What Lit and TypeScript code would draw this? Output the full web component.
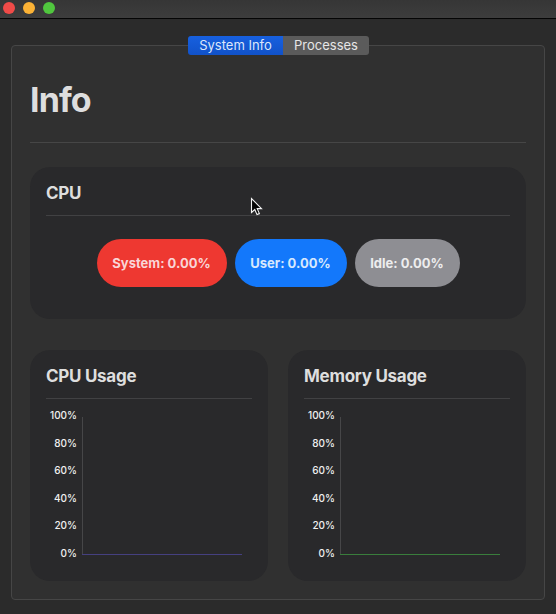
import { LitElement, html, css, svg } from "lit";
import { customElement, property } from "lit/decorators.js";

@customElement("usage-chart")
class UsageChart extends LitElement {
  @property() heading = "";
  @property() tone = "cpu";

  static styles = css`
    :host { display: block; box-sizing: border-box; height: 231px; padding: 16px; border-radius: 20px; background: #29292b; }
    .heading { height: 20px; margin: 0; font: 700 17px/20px Inter, sans-serif; letter-spacing: -0.28px; color: #dedede; white-space: nowrap; }
    .rule { height: 1px; margin-top: 12px; background: #414143; }
    .chart { display: flex; padding-top: 10px; }
    .labels { display: flex; flex-direction: column; justify-content: space-between; width: 31px; height: 150px; text-align: right; font: 500 10px/12px Inter, sans-serif; color: #f0f0f0; }
    .plot { display: block; margin: 8px 0 0 5px; }
    .axis { fill: #464648; }
    .cpu { fill: #454080; }
    .memory { fill: #397d3c; }
  `;

  render() {
    return html`
      <h2 class="heading">${this.heading}</h2>
      <div class="rule"></div>
      <div class="chart">
        <div class="labels">
          ${[100, 80, 60, 40, 20, 0].map((n) => html`<span>${n}%</span>`)}
        </div>
        <svg class="plot" width="160" height="138">
          ${svg`<rect class="axis" x="0" y="0" width="1" height="137"/><rect class=${this.tone} x="0" y="137" width="160" height="1"/>`}
        </svg>
      </div>
    `;
  }
}

@customElement("app-root")
class AppRoot extends LitElement {
  static styles = css`
    :host { display: flex; flex-direction: column; position: relative; box-sizing: border-box; height: 614px; overflow: hidden; background: #2b2b2b; color: #dedede; font-family: Inter, sans-serif; }
    .titlebar { display: flex; box-sizing: border-box; gap: 8px; height: 19px; padding: 2px 3px; border-bottom: 1px solid #050505; background: linear-gradient(#363636, #3d3d3d); }
    .light { width: 12px; height: 12px; border-radius: 50%; }
    .close { background: #f04b48; }
    .minimize { background: #fbb235; }
    .zoom { background: #50c63e; }
    .panel { box-sizing: border-box; width: 534px; height: 555px; margin: 26px 0 0 11px; padding: 0 18px; border: 1px solid #464646; border-radius: 4px; background: #303030; }
    .tabs { display: flex; width: 181px; height: 19px; margin: -10px auto 0; border-radius: 3px; overflow: hidden; position: relative; left: 0.5px; }
    .tab { text-align: center; font: 400 13px/19px Inter, sans-serif; color: #e6e6e6; background: #5b5b5b; white-space: nowrap; }
    .selected { width: 95px; background: linear-gradient(#1760df, #1152c9); color: #dce6fa; }
    .other { width: 86px; }
    .title { height: 42px; margin: 24px 0 0; font: 700 34px/42px Inter, sans-serif; letter-spacing: -0.9px; }
    .rule { height: 1px; background: #464646; }
    .title-rule { margin-top: 21px; }
    .card { box-sizing: border-box; height: 152px; margin-top: 24px; padding: 16px; border-radius: 20px; background: #29292b; }
    .heading { height: 20px; margin: 0; font: 700 17px/20px Inter, sans-serif; letter-spacing: -0.28px; }
    .card-rule { margin-top: 12px; background: #414143; }
    .pills { display: flex; gap: 8px; justify-content: center; margin-top: 23px; }
    .pill { box-sizing: border-box; height: 48px; border-radius: 24px; text-align: center; font: 700 13px/49px Inter, sans-serif; white-space: nowrap; }
    .system { width: 130px; background: #ee3831; color: #f9d5d7; }
    .user { width: 112px; background: #1378fb; color: #d7e8fd; }
    .idle { width: 105px; background: #8e8e93; color: #ededee; }
    .charts { display: grid; grid-template-columns: 238px 238px; gap: 20px; margin-top: 31px; }
    .cursor { position: absolute; left: 250px; top: 197px; }
  `;

  render() {
    return html`
      <div class="titlebar">
        <span class="light close"></span><span class="light minimize"></span><span class="light zoom"></span>
      </div>
      <main class="panel">
        <div class="tabs">
          <div class="tab selected">System Info</div>
          <div class="tab other">Processes</div>
        </div>
        <h1 class="title">Info</h1>
        <div class="rule title-rule"></div>
        <section class="card">
          <h2 class="heading">CPU</h2>
          <div class="rule card-rule"></div>
          <div class="pills">
            <div class="pill system">System: 0.00%</div>
            <div class="pill user">User: 0.00%</div>
            <div class="pill idle">Idle: 0.00%</div>
          </div>
        </section>
        <div class="charts">
          <usage-chart heading="CPU Usage" tone="cpu"></usage-chart>
          <usage-chart heading="Memory Usage" tone="memory"></usage-chart>
        </div>
      </main>
      <svg class="cursor" width="14" height="20" viewBox="0 0 14 20">
        <path d="M1.5 1.5V15.5L4.8 12.5L7 17.6L9.4 16.6L7.2 11.6H11.5Z" fill="#050505" stroke="#f4f4f4" stroke-width="1.1"/>
      </svg>
    `;
  }
}
